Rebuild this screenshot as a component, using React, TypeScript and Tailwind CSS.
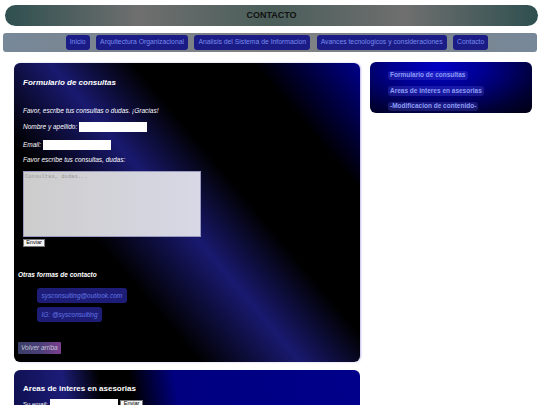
import React from "react";

const navItems = [
  "Inicio",
  "Arquitectura Organizacional",
  "Analisis del Sistema de Informacion",
  "Avances tecnologicos y consideraciones",
  "Contacto",
];

const sideItems = [
  "Formulario de consultas",
  "Areas de interes en asesorias",
  "-Modificacion de contenido-",
];

export default function App() {
  return (
    <div className="w-[540px] min-h-[405px] bg-white font-['Liberation_Sans',Arial,sans-serif] flex flex-col">
      <header className="mt-[5px] ml-[5px] mr-[2px] h-[21px] rounded-full bg-[linear-gradient(to_right,#2f4f4f_0%,#6f6f6f_25%,#4a5e5a_50%,#6f6f6f_75%,#2f4f4f_100%)] flex items-center justify-center">
        <h1 className="text-[9px] font-bold text-[#111] leading-none">CONTACTO</h1>
      </header>

      <nav className="mt-[7px] ml-[3px] mr-[3px] h-[19px] rounded-[3px] bg-[linear-gradient(to_right,#778899,#808080,#778899)] flex items-center justify-center gap-[6.5px] pl-[14px]">
        {navItems.map((n) => (
          <span
            key={n}
            className="h-[15px] px-[4px] flex items-center rounded-[3px] bg-[#1c1c86] text-[#7689ee] text-[6.8px] leading-none whitespace-nowrap"
          >
            {n}
          </span>
        ))}
      </nav>

      <div className="mt-[10px] flex items-start pl-[14px] gap-[10px]">
        <div className="w-[346px] flex flex-col gap-[8px] pt-[1px]">
          <section className="rounded-[6px] bg-[linear-gradient(50deg,#000_0%,#000_31%,#191970_48%,#000_62%,#000_82%,#00008b_100%)] shadow-[1px_0_2px_rgba(150,140,220,0.6)] pl-[9px] pb-[8px] flex flex-col items-start text-white">
            <h2 className="mt-[15px] h-[10px] leading-[10px] text-[8px] font-bold italic">Formulario de consultas</h2>
            <p className="mt-[18px] h-[10px] leading-[10px] text-[6.5px] italic">Favor, escribe tus consultas o dudas. ¡Gracias!</p>
            <div className="mt-[6px] h-[10px] flex items-center gap-[2px]">
              <span className="text-[6.5px] italic leading-none">Nombre y apellido:</span>
              <input className="h-[10px] w-[68px] bg-white border-0 p-0 outline-none" />
            </div>
            <div className="mt-[8px] h-[10px] flex items-center gap-[2px]">
              <span className="text-[6.5px] italic leading-none">Email:</span>
              <input className="h-[10px] w-[68px] bg-white border-0 p-0 outline-none" />
            </div>
            <p className="mt-[5px] h-[10px] leading-[10px] text-[6.5px] italic">Favor escribe tus consultas, dudas:</p>
            <textarea
              placeholder="Consultas, dudas..."
              className="mt-[6px] h-[66px] w-[178px] resize-none border border-[#9a9ac0] bg-[linear-gradient(to_right,#cdcdcd,#d8d8e6)] p-[1px] text-[5.5px] leading-[7px] font-['Liberation_Mono',monospace] text-[#555] placeholder:text-[#9a9a9a] outline-none"
            />
            <button className="mt-[2px] h-[8px] w-[22px] bg-[#f4f4f4] border border-[#777] text-black text-[5.5px] leading-none flex items-center justify-center p-0">
              Enviar
            </button>
            <h3 className="-ml-[5px] mt-[23px] h-[10px] leading-[10px] text-[6.5px] font-bold italic">Otras formas de contacto</h3>
            <span className="ml-[14px] mt-[8px] h-[15px] px-[4.5px] rounded-[3px] bg-[#1d1d78] text-[#6476e4] text-[6.5px] italic flex items-center">
              sysconsulting@outlook.com
            </span>
            <span className="ml-[14px] mt-[4px] h-[15px] px-[4.5px] rounded-[3px] bg-[#1d1d78] text-[#6476e4] text-[6.5px] italic flex items-center">
              IG: @sysconsulting
            </span>
            <button className="-ml-[5px] mt-[20px] h-[12px] px-[3px] rounded-[1px] bg-[linear-gradient(to_right,#3a3f68,#4a3f78_50%,#7a3f8e)] text-[#c4c4d4] text-[6.5px] italic flex items-center">
              Volver arriba
            </button>
          </section>

          <section className="h-[160px] rounded-[6px] bg-[linear-gradient(80deg,#0a0a40_0%,#1c1c78_20%,#000_30%,#000_38%,#000080_50%,#00008b_100%)] pl-[9px] flex flex-col items-start text-white">
            <h2 className="mt-[14px] h-[10px] leading-[10px] text-[8px] font-bold">Areas de interes en asesorias</h2>
            <div className="mt-[5px] h-[10px] flex items-center gap-[2px]">
              <span className="text-[6px] leading-none">Su email:</span>
              <input className="h-[10px] w-[68px] bg-white border-0 p-0 outline-none" />
              <button className="h-[9px] w-[23px] bg-[#f4f4f4] border border-[#777] text-black text-[5.5px] leading-none flex items-center justify-center p-0">
                Enviar
              </button>
            </div>
          </section>
        </div>

        <aside className="w-[162px] h-[51px] rounded-[6px] bg-[radial-gradient(ellipse_at_42%_10%,#0000c4_0%,#000090_35%,#000038_75%,#000010_100%)] pl-[18px] pt-[8.5px] flex flex-col items-start gap-[6px]">
          {sideItems.map((s) => (
            <span
              key={s}
              className="h-[9.5px] px-[2px] rounded-[3px] bg-[rgba(110,110,255,0.22)] text-[#8c9cf6] text-[6.5px] font-bold leading-none flex items-center whitespace-nowrap"
            >
              {s}
            </span>
          ))}
        </aside>
      </div>
    </div>
  );
}
